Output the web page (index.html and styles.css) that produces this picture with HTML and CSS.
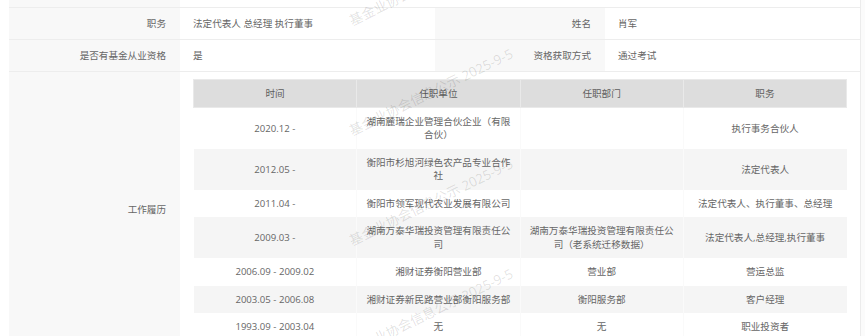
FILE: index.html
```html
<!DOCTYPE html>
<html lang="zh-CN">
<head>
<meta charset="utf-8">
<title>基金从业人员信息</title>
<link rel="stylesheet" href="styles.css">
</head>
<body>
<div class="page">
  <table class="info">
    <colgroup>
      <col class="c-label1"><col class="c-value1"><col class="c-label2"><col class="c-value2">
    </colgroup>
    <tbody>
      <tr class="row-stub"><td class="label"></td><td class="value" colspan="3"></td></tr>
      <tr class="row-line">
        <td class="label">职务</td>
        <td class="value">法定代表人 总经理 执行董事</td>
        <td class="label">姓名</td>
        <td class="value">肖军</td>
      </tr>
      <tr class="row-line">
        <td class="label">是否有基金从业资格</td>
        <td class="value">是</td>
        <td class="label">资格获取方式</td>
        <td class="value">通过考试</td>
      </tr>
      <tr class="row-history">
        <td class="label">工作履历</td>
        <td class="value nested-cell" colspan="3">
          <table class="history">
            <thead>
              <tr><th>时间</th><th>任职单位</th><th>任职部门</th><th>职务</th></tr>
            </thead>
            <tbody>
              <tr><td>2020.12 -</td><td>湖南麓瑞企业管理合伙企业（有限合伙）</td><td></td><td>执行事务合伙人</td></tr>
              <tr><td>2012.05 -</td><td>衡阳市杉旭河绿色农产品专业合作社</td><td></td><td>法定代表人</td></tr>
              <tr><td>2011.04 -</td><td>衡阳市领军现代农业发展有限公司</td><td></td><td>法定代表人、执行董事、总经理</td></tr>
              <tr><td>2009.03 -</td><td>湖南万泰华瑞投资管理有限责任公司</td><td>湖南万泰华瑞投资管理有限责任公司（老系统迁移数据）</td><td>法定代表人,总经理,执行董事</td></tr>
              <tr><td>2006.09 - 2009.02</td><td>湘财证券衡阳营业部</td><td>营业部</td><td>营运总监</td></tr>
              <tr><td>2003.05 - 2006.08</td><td>湘财证券新民路营业部衡阳服务部</td><td>衡阳服务部</td><td>客户经理</td></tr>
              <tr><td>1993.09 - 2003.04</td><td>无</td><td>无</td><td>职业投资者</td></tr>
            </tbody>
          </table>
        </td>
      </tr>
    </tbody>
  </table>
  <div class="watermarks" aria-hidden="true">
    <span class="wm wm-1">基金业协会信息公示 2025-9-5</span>
    <span class="wm wm-2">基金业协会信息公示 2025-9-5</span>
    <span class="wm wm-3">基金业协会信息公示 2025-9-5</span>
    <span class="wm wm-4">基金业协会信息公示 2025-9-5</span>
  </div>
</div>
</body>
</html>
```
FILE: styles.css
```css
html, body {
  margin: 0;
  padding: 0;
}

body {
  background: #fbfbfb;
  font-family: "Open Sans", "Noto Sans CJK SC", sans-serif;
  font-size: 9.6px;
  color: #666;
  overflow: hidden;
}

.page {
  position: relative;
  width: 851px;
  height: 336px;
  padding-left: 9px;
  background: #fff;
  border-right: 1px solid #ececec;
  overflow: hidden;
}

.info {
  width: 851px;
  border-collapse: collapse;
  table-layout: fixed;
}

.c-label1 { width: 171px; }
.c-value1 { width: 255px; }
.c-label2 { width: 170px; }
.c-value2 { width: 255px; }

.info > tbody > tr > td {
  border-bottom: 1px solid #ededed;
  padding: 0 13px;
  line-height: 13.6px;
  vertical-align: middle;
}

.info .label {
  background: #f8f8f8;
  text-align: right;
  padding-right: 14px;
}

.info .value {
  background: #fff;
  text-align: left;
}

.row-stub > td {
  height: 7px;
}

.row-line > td {
  height: 31px;
}

.info > tbody > tr > td.nested-cell {
  padding: 7px 13px 8px;
}

.history {
  width: 100%;
  border-collapse: collapse;
  table-layout: fixed;
  text-align: center;
}

.history th {
  background: #dddddd;
  border: 1px solid #e9e9e9;
  height: 27px;
  padding: 0 6px;
  font-weight: normal;
  color: #5e5e5e;
}

.history td {
  padding: 6.9px 6px;
  line-height: 13.6px;
  color: #666;
  border-left: 1px solid #fafafa;
}

.history td:first-child {
  border-left: none;
}

.history tbody tr:nth-child(even) td {
  background: #f5f5f5;
}

.watermarks {
  position: absolute;
  inset: 0;
  pointer-events: none;
}

.wm {
  position: absolute;
  left: 431px;
  font-size: 13.5px;
  line-height: 16px;
  white-space: nowrap;
  color: rgba(0, 0, 0, 0.12);
  transform: translate(-50%, -50%) rotate(-26deg);
}

.wm-1 { top: -18px; }
.wm-2 { top: 92px; }
.wm-3 { top: 202px; }
.wm-4 { top: 312px; }
```
